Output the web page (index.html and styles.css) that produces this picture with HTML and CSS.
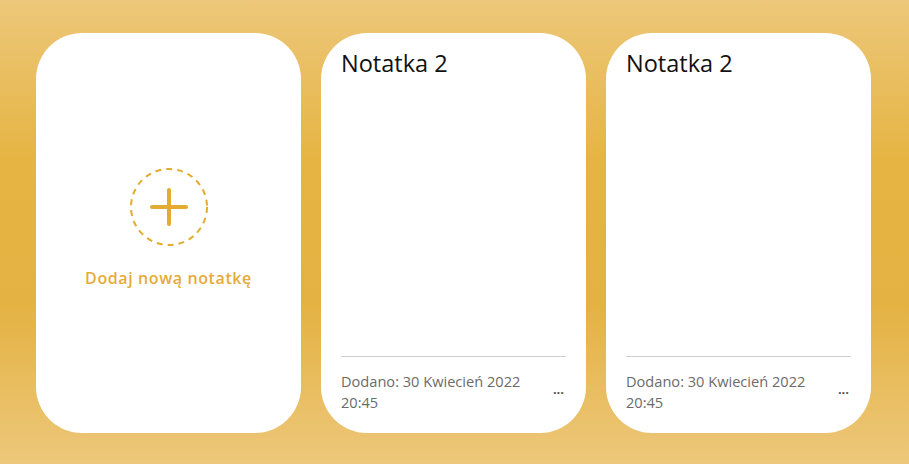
FILE: index.html
```html
<!DOCTYPE html>
<html lang="pl">
<head>
<meta charset="utf-8">
<title>Notatki</title>
<link rel="stylesheet" href="styles.css">
</head>
<body>
<main class="board">
  <section class="card card-add">
    <svg class="add-icon" width="80" height="80" viewBox="0 0 80 80" aria-hidden="true">
      <circle cx="40" cy="40" r="38" fill="none" stroke="#e3ab2f" stroke-width="2" stroke-dasharray="6 5"/>
      <path d="M40 23 V57 M23 40 H57" stroke="#e3ab2f" stroke-width="4" stroke-linecap="round"/>
    </svg>
    <div class="add-label">Dodaj nową notatkę</div>
  </section>
  <section class="card note">
    <h2 class="note-title">Notatka 2</h2>
    <div class="note-body"></div>
    <footer class="note-footer">
      <span class="note-date">Dodano: 30 Kwiecień 2022 20:45</span>
      <span class="note-more">...</span>
    </footer>
  </section>
  <section class="card note">
    <h2 class="note-title">Notatka 2</h2>
    <div class="note-body"></div>
    <footer class="note-footer">
      <span class="note-date">Dodano: 30 Kwiecień 2022 20:45</span>
      <span class="note-more">...</span>
    </footer>
  </section>
</main>
</body>
</html>
```
FILE: styles.css
```css
html, body {
  margin: 0;
  height: 100%;
}
body {
  background: linear-gradient(180deg, #edc77a 0%, #e5b442 35%, #e4b242 65%, #edc77a 100%);
  font-family: "Open Sans", "Noto Sans", sans-serif;
}
.board {
  display: flex;
  gap: 20px;
  padding: 33px 36px;
}
.card {
  width: 265px;
  height: 400px;
  box-sizing: border-box;
  background: #fff;
  border-radius: 46px;
  padding: 20px;
  display: flex;
  flex-direction: column;
}
.card-add {
  align-items: center;
  justify-content: center;
  padding-bottom: 30px;
}
.add-label {
  margin-top: 20px;
  color: #e6ab3a;
  font-size: 16px;
  font-weight: 600;
  letter-spacing: 0.6px;
}
.note-title {
  margin: -2px 0 0;
  font-size: 23.5px;
  font-weight: 500;
  line-height: 24px;
  color: #111;
}
.note-body {
  flex: 1;
}
.note-footer {
  border-top: 1px solid #cfcfcf;
  padding-top: 14px;
  display: flex;
  align-items: center;
  justify-content: space-between;
  gap: 10px;
}
.note-date {
  font-size: 14.6px;
  line-height: 21px;
  color: #6b6b6b;
  width: 198px;
}
.note-more {
  color: #555;
  font-size: 13px;
  font-weight: 700;
  line-height: 10px;
  padding-bottom: 6px;
  margin-right: 2px;
}
```
